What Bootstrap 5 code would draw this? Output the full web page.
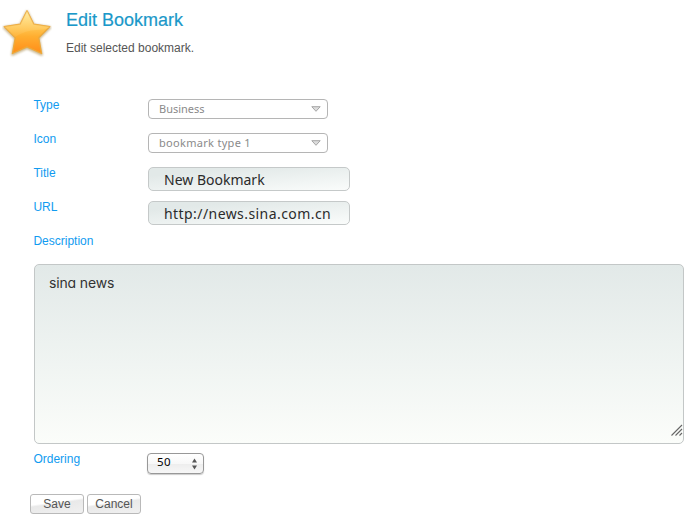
<!DOCTYPE html>
<html lang="en">
<head>
<meta charset="utf-8">
<title>Edit Bookmark</title>
<link href="https://cdn.jsdelivr.net/npm/bootstrap@5.3.0/dist/css/bootstrap.min.css" rel="stylesheet">
<style>
body{font:12px/16px "Liberation Sans",Arial,sans-serif;color:#555;background:#fff;width:688px;height:522px;overflow:hidden}
.page-head{height:92px;padding:6px 0 0 2px}
.page-head h1{font-size:18px;line-height:22px;color:#1b98c9;margin:3px 0 9px;font-weight:400;-webkit-text-stroke:.2px #1b98c9}
.head-text{margin-left:14px}
.edit-form{padding-left:34px}
.field-row{height:34px}
.field-row.ordering{height:40px}
.field-label{width:114px;padding-top:5px;color:#119bf0;line-height:16px;text-indent:-.6px}
.ordering .field-label{padding-top:7px}
.pick{width:180px;height:20px;margin-top:7px;border:1px solid #b5b5b5;border-radius:4px;padding:0 6px 0 10px;font:11px/18px "Noto Sans",sans-serif;color:#8a8a8a;background:#fff}
.pick .wide{letter-spacing:.3px}
.entry{width:202px;height:24px;margin-top:7px;border:1px solid #c5c9c9;border-radius:5px;padding:0 16px 0 15px;font:14px/22px "Noto Sans",sans-serif;color:#2b2b2b;background:linear-gradient(175deg,#e2e9e8 20%,#fafcfb 100%)}
.entry.url{letter-spacing:.43px}
.desc-wrap{width:650px;height:180px;margin-top:2px}
.desc{width:650px;height:180px;resize:none;border:1px solid #c3c7c7;border-radius:5px;padding:8px 14px;font:14px/20px Inter,sans-serif;letter-spacing:-.15px;font-feature-settings:"cv11" 1;color:#333;background:linear-gradient(#e2e9e8,#fbfdfa);overflow:hidden}
.grip{right:1px;bottom:8px}
.stepper{width:57px;height:21px;margin:9px 0 0 -1px;border:1px solid #989898;border-radius:4px;padding:0 5px 0 9px;font:11.5px/16px "Noto Sans",sans-serif;color:#000;background:linear-gradient(#fff,#f8f8f8 50%,#ededed 51%,#f7f7f7);box-shadow:0 1px 1px #ccc}
.stepper span{padding-bottom:3px;letter-spacing:.3px}
.actions{padding:10px 0 0 30px;gap:3px}
.act{height:20px;width:54px;border:1px solid #b9b9b9;border-radius:3px;padding:0;font-size:12px;line-height:18px;color:#555;background:linear-gradient(172deg,#fff 40%,#e9e9e9 48%,#f0f0f0)}
</style>
<script src="https://cdn.jsdelivr.net/npm/bootstrap@5.3.0/dist/js/bootstrap.bundle.min.js"></script>
</head>
<body>
<header class="page-head d-flex align-items-start">
  <svg width="50" height="52" viewBox="0 0 50 52" aria-hidden="true">
    <defs>
      <linearGradient id="gold" x1="0" y1="0" x2="0" y2="1"><stop offset="0" stop-color="#ffe88e"/><stop offset=".4" stop-color="#ffc450"/><stop offset=".6" stop-color="#ffae30"/><stop offset="1" stop-color="#ff8c18"/></linearGradient>
      <linearGradient id="shine" x1="0" y1="0" x2="0" y2="1"><stop offset="0" stop-color="#fff6c0" stop-opacity=".6"/><stop offset="1" stop-color="#ffd27a" stop-opacity=".15"/></linearGradient>
      <filter id="soft" x="-20%" y="-20%" width="140%" height="140%"><feGaussianBlur stdDeviation=".9"/></filter>
      <clipPath id="shape"><path d="M25 4.8L31.8 18.2L47.8 20.6L36.7 31.7L39.6 47.5L25 40.8L10.4 47.5L13.3 31.7L2.2 20.6L18.2 18.2Z"/></clipPath>
    </defs>
    <path d="M25 4.8L31.8 18.2L47.8 20.6L36.7 31.7L39.6 47.5L25 40.8L10.4 47.5L13.3 31.7L2.2 20.6L18.2 18.2Z" fill="#a98a4c" stroke="#a98a4c" stroke-width="2.5" stroke-linejoin="round" opacity=".6" filter="url(#soft)" transform="translate(0 1)"/>
    <path d="M25 4.8L31.8 18.2L47.8 20.6L36.7 31.7L39.6 47.5L25 40.8L10.4 47.5L13.3 31.7L2.2 20.6L18.2 18.2Z" fill="url(#gold)" stroke="#eda93a" stroke-width="1.3" stroke-linejoin="round"/>
    <path d="M0 0H50V21Q42 24 34 24Q24 24 13 31L0 31Z" fill="url(#shine)" clip-path="url(#shape)"/>
  </svg>
  <div class="head-text">
    <h1>Edit Bookmark</h1>
    <p class="mb-0">Edit selected bookmark.</p>
  </div>
</header>
<form>
  <div class="edit-form">
    <div class="field-row d-flex">
      <label class="field-label">Type</label>
      <div class="pick d-flex justify-content-between align-items-center" role="combobox"><span>Business</span>
        <svg width="10" height="6" viewBox="0 0 10 6"><path d="M.8.7H9.2L5 5.3Z" fill="#ddd" stroke="#a5a5a5"/></svg></div>
    </div>
    <div class="field-row d-flex">
      <label class="field-label">Icon</label>
      <div class="pick d-flex justify-content-between align-items-center" role="combobox"><span class="wide">bookmark type 1</span>
        <svg width="10" height="6" viewBox="0 0 10 6"><path d="M.8.7H9.2L5 5.3Z" fill="#ddd" stroke="#a5a5a5"/></svg></div>
    </div>
    <div class="field-row d-flex">
      <label class="field-label" for="title">Title</label>
      <input id="title" class="entry" type="text" value="New Bookmark">
    </div>
    <div class="field-row d-flex">
      <label class="field-label" for="url">URL</label>
      <input id="url" class="entry url" type="text" value="http://news.sina.com.cn">
    </div>
    <div class="field-row d-flex"><label class="field-label" for="desc">Description</label></div>
    <div class="desc-wrap position-relative">
      <textarea id="desc" class="desc d-block">sina news</textarea>
      <svg class="grip position-absolute" width="12" height="12" viewBox="0 0 12 12"><path d="M.5 11.5L11 1M4.5 11.5L11 5M8.500 11.5L11 9" stroke="#666" stroke-width="1.1" fill="none"/></svg>
    </div>
    <div class="field-row ordering d-flex">
      <label class="field-label">Ordering</label>
      <div class="stepper d-flex justify-content-between align-items-center"><span>50</span>
        <svg width="7" height="12" viewBox="0 0 7 12"><path d="M3.5 .5L6 4.500H1ZM3.500 11.500L6 7.500H1Z" fill="#555"/></svg></div>
    </div>
  </div>
  <div class="actions d-flex">
    <button type="button" class="act">Save</button>
    <button type="button" class="act">Cancel</button>
  </div>
</form>
</body>
</html>
